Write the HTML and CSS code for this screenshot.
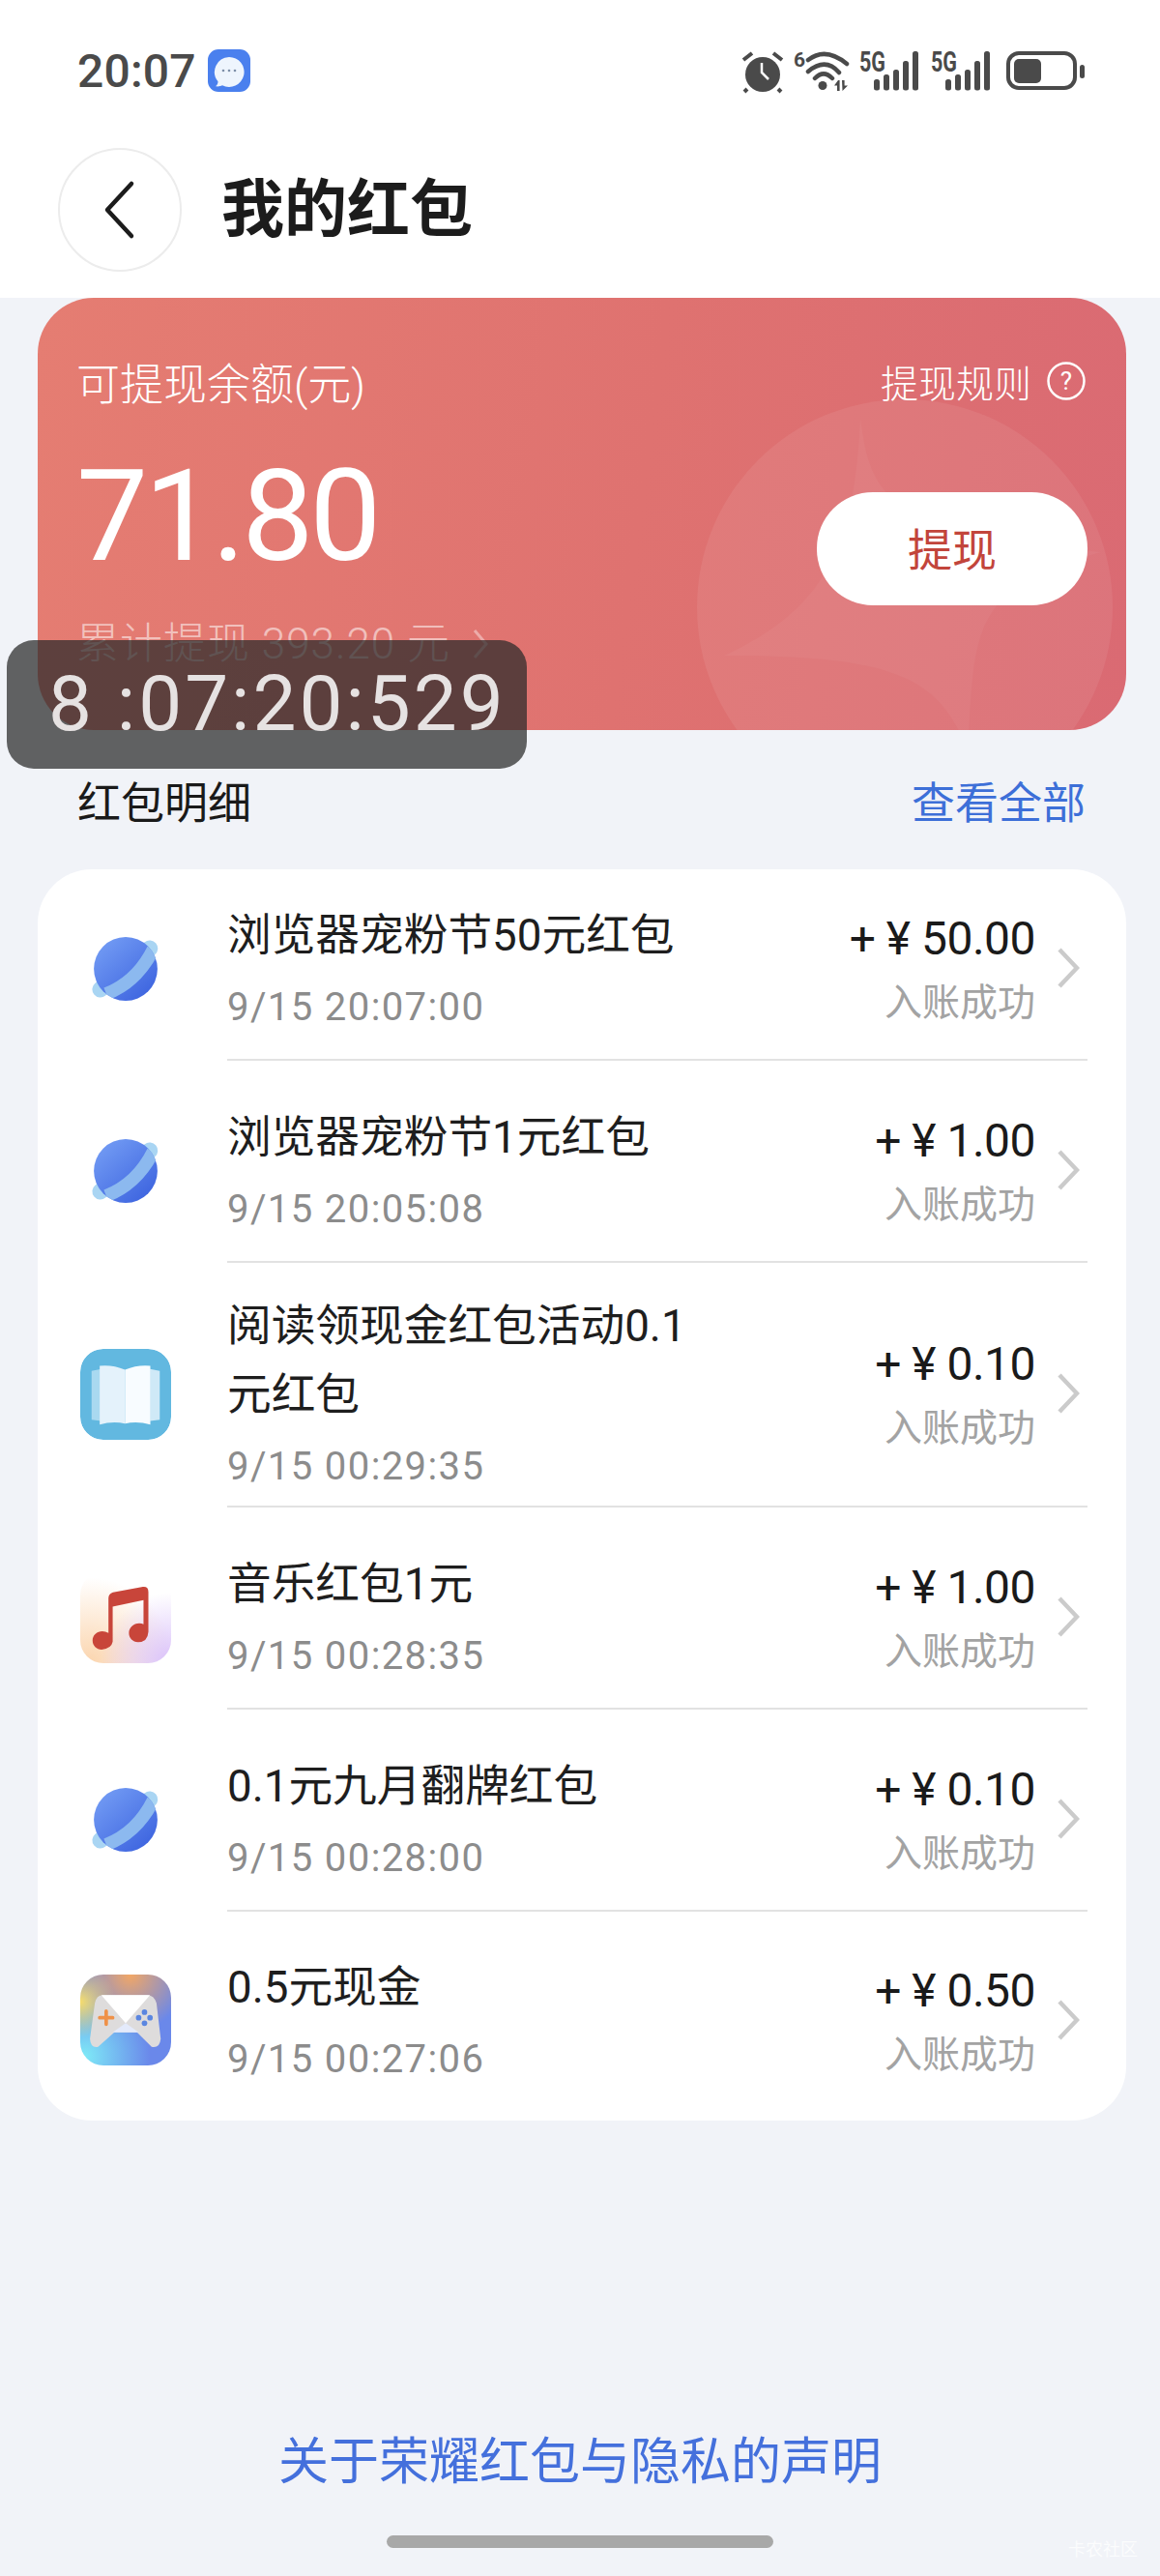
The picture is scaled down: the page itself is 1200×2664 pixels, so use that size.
FILE: index.html
```html
<!DOCTYPE html>
<html lang="zh-CN">
<head>
<meta charset="utf-8">
<title>我的红包</title>
<link rel="stylesheet" href="styles.css">
</head>
<body>
<div class="page">
  <header class="top">
    <div class="status">
      <div class="status-left">
        <span class="clock">20:07</span>
        <svg class="msg-icon" viewBox="0 0 44 44">
          <rect width="44" height="44" rx="11" fill="#4a80ee"/>
          <path d="M22 8a15.500 15.500 0 1 1-7 29.300c-2 1-4 1.300-7 1 1.800-1.300 2.500-3 2.500-5A15.500 15.500 0 0 1 22 8z" fill="#eef5fd"/>
          <circle cx="16" cy="22" r="1.300" fill="#7d8fa8"/><circle cx="22" cy="22" r="1.300" fill="#7d8fa8"/><circle cx="28" cy="22" r="1.300" fill="#7d8fa8"/>
        </svg>
      </div>
      <div class="status-right">
        <svg class="ico-alarm" viewBox="0 -8 44 52">
          <circle cx="22" cy="24" r="18" fill="#4a4a4a"/>
          <path d="M21 12v10l7 7" fill="none" stroke="#fff" stroke-width="2.500"/>
          <path d="M2 9l9-7M33 2l9 7M6 39l-3 3M38 39l3 3" fill="none" stroke="#4a4a4a" stroke-width="4"/>
        </svg>
        <svg class="ico-wifi" viewBox="0 -8 58 52">
          <text x="0" y="16" class="wifi-label">6</text>
          <path d="M15 9Q33-5 55 13M15 21Q33 6 47 22M22 28Q31 19 40 28" fill="none" stroke="#4a4a4a" stroke-width="4.500" stroke-linecap="round"/>
          <circle cx="30" cy="35.500" r="4.500" fill="#4a4a4a"/>
          <path d="M46 30l-4 5.500h3V41h2.600V30zM50 30h2.600v5.500H56L50.500 41z" fill="#4a4a4a"/>
        </svg>
        <svg class="ico-sig" viewBox="0 -8 64 52">
          <text x="0" y="21" class="sig-label" textLength="27" lengthAdjust="spacingAndGlyphs">5G</text>
          <rect x="15" y="29" width="6" height="11.500" rx="2.500"/><rect x="25" y="24" width="6" height="16.500" rx="2.500"/><rect x="35" y="19" width="6" height="21.500" rx="2.500"/><rect x="45" y="10" width="6" height="30.500" rx="2.500"/><rect x="55" y="0" width="6" height="40.500" rx="2.500"/>
        </svg>
        <svg class="ico-sig" viewBox="0 -8 64 52">
          <text x="0" y="21" class="sig-label" textLength="27" lengthAdjust="spacingAndGlyphs">5G</text>
          <rect x="15" y="29" width="6" height="11.500" rx="2.500"/><rect x="25" y="24" width="6" height="16.500" rx="2.500"/><rect x="35" y="19" width="6" height="21.500" rx="2.500"/><rect x="45" y="10" width="6" height="30.500" rx="2.500"/><rect x="55" y="0" width="6" height="40.500" rx="2.500"/>
        </svg>
        <svg class="ico-batt" viewBox="0 -8 86 52">
          <rect x="6" y="2" width="69" height="36" rx="11" fill="none" stroke="#4a4a4a" stroke-width="4"/>
          <rect x="12" y="8" width="28" height="25" rx="5" fill="#4a4a4a"/>
          <rect x="80" y="14" width="5" height="14" rx="2.500" fill="#4a4a4a"/>
        </svg>
      </div>
    </div>
    <nav class="nav">
      <div class="back">
        <svg viewBox="0 0 40 64" class="back-glyph"><path d="M32 5L7 32l25 27" fill="none" stroke="#1c1c1c" stroke-width="4.500" stroke-linecap="round" stroke-linejoin="round"/></svg>
      </div>
      <h1 class="title">我的红包</h1>
    </nav>
  </header>

  <section class="balance">
    <svg class="balance-art" viewBox="0 0 1125 447">
      <ellipse cx="897" cy="320" rx="215" ry="215" fill="#fff" opacity=".07"/>
      <path d="M851 124C862 210 880 240 1100 263C960 300 970 350 962 470C935 390 880 370 710 370C820 320 845 250 851 124z" fill="#fff" opacity=".04"/>
    </svg>
    <div class="balance-top">
      <span class="balance-label">可提现余额(元)</span>
      <span class="rules">提现规则
        <svg class="help" viewBox="0 0 40 40"><circle cx="20" cy="20" r="18.500" fill="none" stroke="#fff" stroke-width="2.500"/><text x="20" y="29" class="help-mark">?</text></svg>
      </span>
    </div>
    <div class="balance-main">
      <div>
        <div class="balance-num">71.80</div>
        <div class="balance-total">累计提现 393.20 元
          <svg class="total-arrow" viewBox="0 0 18 32"><path d="M3 2l12 14L3 30" fill="none" stroke="#fff" stroke-width="3"/></svg>
        </div>
      </div>
      <button class="withdraw">提现</button>
    </div>
  </section>

  <div class="section-head">
    <span class="section-title">红包明细</span>
    <span class="section-link">查看全部</span>
  </div>

  <section class="list">
    <div class="row row-first">
      <div class="row-icon">
        <svg class="planet" viewBox="70 45 280 280"><use href="#planet-art"/></svg>
      </div>
      <div class="row-body">
        <div class="row-text"><div class="row-title">浏览器宠粉节50元红包</div><div class="row-date">9/15 20:07:00</div></div>
        <div class="row-amount"><div class="amount">+ ¥ 50.00</div><div class="state">入账成功</div></div>
        <svg class="chev" viewBox="0 0 24 44"><path d="M3 3l18 19L3 41" fill="none" stroke="#cbcbcb" stroke-width="4.500"/></svg>
      </div>
    </div>
    <div class="row">
      <div class="row-icon">
        <svg class="planet" viewBox="70 45 280 280"><use href="#planet-art"/></svg>
      </div>
      <div class="row-body">
        <div class="row-text"><div class="row-title">浏览器宠粉节1元红包</div><div class="row-date">9/15 20:05:08</div></div>
        <div class="row-amount"><div class="amount">+ ¥ 1.00</div><div class="state">入账成功</div></div>
        <svg class="chev" viewBox="0 0 24 44"><path d="M3 3l18 19L3 41" fill="none" stroke="#cbcbcb" stroke-width="4.500"/></svg>
      </div>
    </div>
    <div class="row row-tall">
      <div class="row-icon">
        <svg class="tile" viewBox="70 72 280 280">
          <rect x="70" y="72" width="280" height="280" rx="70" fill="#62b8e0"/>
          <path d="M105 140l30-6v160l-30-4z" fill="#a9d9f0"/>
          <path d="M315 140l-30-6v160l30-4z" fill="#cfe9f7"/>
          <path d="M130 124q40-4 78 12v166q-38-8-78 3z" fill="#e4f2fb"/>
          <path d="M208 136q38-16 78-12v181q-40-11-78-3z" fill="#f8fcff"/>
        </svg>
      </div>
      <div class="row-body">
        <div class="row-text"><div class="row-title">阅读领现金红包活动0.1<br>元红包</div><div class="row-date">9/15 00:29:35</div></div>
        <div class="row-amount"><div class="amount">+ ¥ 0.10</div><div class="state">入账成功</div></div>
        <svg class="chev" viewBox="0 0 24 44"><path d="M3 3l18 19L3 41" fill="none" stroke="#cbcbcb" stroke-width="4.500"/></svg>
      </div>
    </div>
    <div class="row">
      <div class="row-icon">
        <div class="tile tile-music">
          <svg class="tile-art" viewBox="70 15 280 280">
            <path d="M157 95q0-14 14-18l92-17q17-2 17 16v122q-2 32-32 32c-16 0-28-12-28-28s14-30 32-30q8 0 13 3v-74l-95 20v108q-4 22-34 24c-16 0-28-12-28-28s14-28 30-28q10 0 19 5z" fill="#c8453a"/>
          </svg>
        </div>
      </div>
      <div class="row-body">
        <div class="row-text"><div class="row-title">音乐红包1元</div><div class="row-date">9/15 00:28:35</div></div>
        <div class="row-amount"><div class="amount">+ ¥ 1.00</div><div class="state">入账成功</div></div>
        <svg class="chev" viewBox="0 0 24 44"><path d="M3 3l18 19L3 41" fill="none" stroke="#cbcbcb" stroke-width="4.500"/></svg>
      </div>
    </div>
    <div class="row">
      <div class="row-icon">
        <svg class="planet" viewBox="70 45 280 280"><use href="#planet-art"/></svg>
      </div>
      <div class="row-body">
        <div class="row-text"><div class="row-title">0.1元九月翻牌红包</div><div class="row-date">9/15 00:28:00</div></div>
        <div class="row-amount"><div class="amount">+ ¥ 0.10</div><div class="state">入账成功</div></div>
        <svg class="chev" viewBox="0 0 24 44"><path d="M3 3l18 19L3 41" fill="none" stroke="#cbcbcb" stroke-width="4.500"/></svg>
      </div>
    </div>
    <div class="row row-last">
      <div class="row-icon">
        <div class="tile tile-game">
          <svg class="tile-art" viewBox="70 62 280 280">
            <path d="M140 125q-20 0-25 25l-15 110q2 30 25 25l50-45h70l45 45q25 5 28-25l-13-110q-7-25-30-25z" fill="#dedcdc"/>
            <path d="M135 125h150l-75 87z" fill="#fff"/>
            <path d="M210 212l40 28h-80z" fill="#e4eafb"/>
            <path d="M130 195h40M150 175v40" stroke="#ef9148" stroke-width="11" stroke-linecap="round"/>
            <circle cx="268" cy="178" r="8.500" fill="#5b86e0"/><circle cx="250" cy="195" r="8.500" fill="#5b86e0"/><circle cx="285" cy="195" r="8.500" fill="#5b86e0"/><circle cx="268" cy="212" r="8.500" fill="#5b86e0"/>
          </svg>
        </div>
      </div>
      <div class="row-body">
        <div class="row-text"><div class="row-title">0.5元现金</div><div class="row-date">9/15 00:27:06</div></div>
        <div class="row-amount"><div class="amount">+ ¥ 0.50</div><div class="state">入账成功</div></div>
        <svg class="chev" viewBox="0 0 24 44"><path d="M3 3l18 19L3 41" fill="none" stroke="#cbcbcb" stroke-width="4.500"/></svg>
      </div>
    </div>
  </section>

  <footer class="foot">
    <a class="foot-link">关于荣耀红包与隐私的声明</a>
    <div class="home-bar"></div>
  </footer>

  <div class="timer">8 :07:20:529</div>
  <div class="watermark">卡农社区</div>

  <svg class="defs" width="0" height="0">
    <defs>
      <linearGradient id="planet-fill" x1="0.15" y1="0.1" x2="0.85" y2="0.9">
        <stop offset="0" stop-color="#7099f3"/><stop offset="1" stop-color="#3f66e0"/>
      </linearGradient>
      <clipPath id="planet-clip"><circle cx="210" cy="185" r="98"/></clipPath>
      <g id="planet-art">
        <path d="M132 248L284 122" stroke="#a9d5f3" stroke-width="50" stroke-linecap="round"/>
        <circle cx="210" cy="185" r="98" fill="url(#planet-fill)"/>
        <path d="M150 262Q245 225 295 125" fill="none" stroke="#8cb9ef" stroke-width="40" clip-path="url(#planet-clip)"/>
      </g>
    </defs>
  </svg>
</div>
</body>
</html>
```

FILE: styles.css
```css
* { box-sizing: border-box; }

html, body { margin: 0; padding: 0; }

body {
  font-family: Roboto, "Noto Sans CJK SC", sans-serif;
  background: #f1f3f8;
  color: #1a1a1a;
}

.page {
  position: relative;
  width: 1200px;
  height: 2664px;
  display: flex;
  flex-direction: column;
  overflow: hidden;
}

.defs { position: absolute; }

/* Status bar and navigation */
.top { background: #fff; height: 308px; }

.status {
  height: 146px;
  display: flex;
  align-items: center;
  justify-content: space-between;
  padding: 0 77px 0 80px;
}

.status-left { display: flex; align-items: center; gap: 12px; }

.clock { font-size: 48px; font-weight: 500; color: #4a4a4a; letter-spacing: .2px; }

.msg-icon { width: 44px; height: 44px; }

.status-right { display: flex; align-items: flex-start; gap: 10px; height: 52px; margin-top: -4px; }

.ico-alarm { width: 44px; height: 52px; }
.ico-wifi { width: 58px; height: 52px; }
.ico-sig { width: 64px; height: 52px; fill: #4a4a4a; }
.ico-batt { width: 86px; height: 52px; }

.sig-label { font: 700 29px Roboto, sans-serif; fill: #4a4a4a; }
.wifi-label { font: 700 21px Roboto, sans-serif; fill: #4a4a4a; }

.nav { display: flex; align-items: center; padding: 7px 0 0 60px; }

.back {
  width: 128px;
  height: 128px;
  border: 2px solid #ececec;
  border-radius: 50%;
  display: flex;
  align-items: center;
  justify-content: center;
}

.back-glyph { width: 40px; height: 64px; }

.title { margin: 0 0 0 41px; font-size: 65px; font-weight: 700; color: #1c1c1c; line-height: 128px; }

/* Balance card */
.balance {
  position: relative;
  height: 447px;
  margin: 0 35px 0 39px;
  padding: 57px 40px 0;
  border-radius: 58px;
  overflow: hidden;
  color: #fff;
  background: linear-gradient(98deg, #e57d72 0%, #df7270 55%, #da6a73 100%);
}

.balance-art { position: absolute; left: 0; top: 0; width: 1125px; height: 447px; }

.balance-top,
.balance-main { position: relative; display: flex; justify-content: space-between; }

.balance-top { align-items: center; height: 58px; }

.balance-label { font-size: 45px; font-weight: 300; }

.rules { display: flex; align-items: center; gap: 16px; font-size: 39px; font-weight: 300; margin-right: 2px; }

.help { width: 40px; height: 40px; }

.help-mark { font: 400 26px Roboto, sans-serif; fill: #fff; text-anchor: middle; }

.balance-num { margin-top: 46px; font-size: 132px; line-height: 130px; letter-spacing: -4px; }

.balance-total {
  display: flex;
  align-items: center;
  gap: 22px;
  margin-top: 37px;
  font-size: 44px;
  line-height: 60px;
  font-weight: 300;
  letter-spacing: 1px;
  color: rgba(255, 255, 255, .55);
}

.total-arrow { width: 18px; height: 32px; opacity: .4; }

.withdraw {
  width: 280px;
  height: 117px;
  margin-top: 86px;
  padding: 0 0 6px;
  border: 0;
  border-radius: 58px;
  background: #fff;
  color: #c2453b;
  font: 400 46px Roboto, "Noto Sans CJK SC", sans-serif;
}

/* Section heading */
.section-head {
  height: 144px;
  padding: 0 77px 0 80px;
  display: flex;
  align-items: center;
  justify-content: space-between;
}

.section-title { font-size: 45px; font-weight: 400; }

.section-link { font-size: 45px; color: #3d6fd8; }

/* Record list */
.list {
  margin: 0 35px 0 39px;
  background: #fff;
  border-radius: 56px;
  overflow: hidden;
}

.row { display: flex; height: 209px; padding-top: 18px; }
.row-first { height: 198px; padding-top: 8px; }
.row-tall { height: 253px; }
.row-last { height: 216px; padding-top: 8px; }

.row-icon { width: 181px; margin-right: 15px; display: flex; align-items: center; justify-content: center; }

.planet { width: 94px; height: 94px; }

.tile { width: 94px; height: 94px; border-radius: 24px; }
.tile-art { display: block; width: 94px; height: 94px; }

.tile-music {
  background:
    radial-gradient(circle at 100% 100%, #d9c0fa 0%, rgba(217, 192, 250, 0) 55%),
    radial-gradient(circle at 10% 100%, #fbd5ae 0%, rgba(251, 213, 174, 0) 70%),
    #fff;
}

.tile-game {
  background:
    radial-gradient(circle at 0% 30%, #f7dd6c 0%, rgba(247, 221, 108, 0) 32%),
    radial-gradient(circle at 55% 0%, #f2a765 0%, rgba(242, 167, 101, 0) 55%),
    radial-gradient(circle at 5% 90%, #7ee9f7 0%, rgba(126, 233, 247, 0) 55%),
    #6a88ea;
}

.row-body {
  flex: 1;
  display: flex;
  align-items: center;
  margin-right: 40px;
  position: relative;
}

.row:not(.row-last) .row-body { border-bottom: 2px solid #e2e2e2; }

.row-text { flex: 1; margin-top: -3px; }

.row-title { font-size: 45.7px; line-height: 71px; color: #1e1e1e; }

.row-date { margin-top: 14px; font-size: 40px; line-height: 50px; letter-spacing: 1.4px; color: #8c8c8c; }

.row-amount { text-align: right; margin-right: 22px; }

.amount { font-size: 48px; line-height: 72px; letter-spacing: -.5px; color: #1a1a1a; }

.state { font-size: 39px; line-height: 60px; color: #a3a3a3; }

.chev { width: 24px; height: 44px; margin-right: 8px; }

/* Footer */
.foot { display: flex; flex-direction: column; align-items: center; margin-top: 319px; }

.foot-link { font-size: 52px; line-height: 70px; color: #4470dc; }

.home-bar { width: 400px; height: 13px; margin-top: 40px; border-radius: 7px; background: #a8a8a8; }

/* Overlays */
.timer {
  position: absolute;
  left: 7px;
  top: 662px;
  width: 538px;
  height: 133px;
  padding-left: 43px;
  border-radius: 28px;
  background: rgba(42, 42, 42, .73);
  color: #e6e2e2;
  font-size: 80px;
  font-weight: 400;
  line-height: 133px;
  letter-spacing: 3px;
  white-space: nowrap;
}

.watermark {
  position: absolute;
  left: 1105px;
  top: 2622px;
  font-size: 18px;
  color: rgba(255, 255, 255, .75);
}
```
